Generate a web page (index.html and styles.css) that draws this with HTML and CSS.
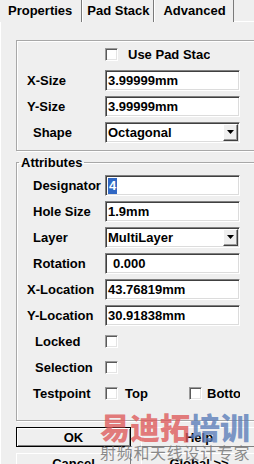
FILE: index.html
```html
<!DOCTYPE html>
<html lang="en">
<head>
  <meta charset="UTF-8">
  <meta name="viewport" content="width=device-width, initial-scale=1.0">
  <title>Pad</title>
  <link rel="stylesheet" href="styles.css">
</head>
<body>
  <div class="dialog">
    <div class="tabs">
      <div class="tab active">Properties</div>
      <div class="tab">Pad Stack</div>
      <div class="tab">Advanced</div>
      <div class="tab-fill"></div>
    </div>

    <div class="page">
      <div class="group">
        <div class="row">
          <span></span>
          <label class="opt clip"><span class="check"></span>Use Pad Stack</label>
        </div>
        <div class="row">
          <span class="lbl lbl-out">X-Size</span>
          <div class="field">3.99999mm</div>
        </div>
        <div class="row">
          <span class="lbl lbl-out">Y-Size</span>
          <div class="field">3.99999mm</div>
        </div>
        <div class="row">
          <span class="lbl">Shape</span>
          <div class="field combo">
            <span>Octagonal</span>
            <span class="drop"><svg width="7" height="4" viewBox="0 0 7 4"><polygon points="0,0 7,0 3.5,4" fill="#000"/></svg></span>
          </div>
        </div>
      </div>

      <fieldset class="group attrs">
        <legend>Attributes</legend>
        <div class="row">
          <span class="lbl">Designator</span>
          <div class="field"><span class="sel">4</span></div>
        </div>
        <div class="row">
          <span class="lbl">Hole Size</span>
          <div class="field">1.9mm</div>
        </div>
        <div class="row">
          <span class="lbl">Layer</span>
          <div class="field combo">
            <span>MultiLayer</span>
            <span class="drop"><svg width="7" height="4" viewBox="0 0 7 4"><polygon points="0,0 7,0 3.5,4" fill="#000"/></svg></span>
          </div>
        </div>
        <div class="row">
          <span class="lbl">Rotation</span>
          <div class="field indent">0.000</div>
        </div>
        <div class="row">
          <span class="lbl lbl-out">X-Location</span>
          <div class="field">43.76819mm</div>
        </div>
        <div class="row">
          <span class="lbl lbl-out">Y-Location</span>
          <div class="field">30.91838mm</div>
        </div>
        <div class="row">
          <span class="lbl lbl-in">Locked</span>
          <div class="opts"><span class="check"></span></div>
        </div>
        <div class="row">
          <span class="lbl lbl-in">Selection</span>
          <div class="opts"><span class="check"></span></div>
        </div>
        <div class="row">
          <span class="lbl">Testpoint</span>
          <div class="opts">
            <label class="opt"><span class="check"></span>Top</label>
            <label class="opt tight"><span class="check"></span>Bottom</label>
          </div>
        </div>
      </fieldset>

      <div class="buttons">
        <button class="btn default">OK</button>
        <button class="btn">Help</button>
        <button class="btn">Cancel</button>
        <button class="btn">Global &gt;&gt;</button>
      </div>
    </div>

    <div class="watermark">
      <div class="wm-title"><span class="wm-red">易迪拓</span><span class="wm-blue">培训</span></div>
      <div class="wm-sub">射频和天线设计专家</div>
    </div>
  </div>
</body>
</html>
```

FILE: styles.css
```css
body {
  margin: 0;
  background: #efefef;
  font-family: "Liberation Sans", Arial, sans-serif;
  font-size: 13px;
  font-weight: bold;
  color: #000;
  overflow: hidden;
}
.dialog {
  position: relative;
  width: 254px;
  height: 464px;
  overflow: hidden;
}

/* tab strip */
.tabs {
  display: flex;
  height: 22px;
}
.tab {
  line-height: 21px;
  padding: 0 4px;
  border-left: 1px solid #fff;
  border-right: 1px solid #7a7a7a;
  white-space: nowrap;
}
.tab.active {
  padding: 0 9px 0 8px;
  border-left: none;
}
.tab:nth-child(3) {
  padding: 0 7px 0 8px;
}
.tab-fill {
  flex: 1;
  border-bottom: 1px solid #fff;
}

.page {
  border-left: 1px solid #fff;
  padding-top: 18px;
}

/* etched group boxes */
.group {
  margin: 0 -40px 0 15px;
  padding: 0 0 5px;
  border: 1px solid #a8a8a8;
  box-shadow: inset 1px 1px 0 #fff, 1px 1px 0 #fff;
}
.attrs {
  margin-top: 4px;
  padding: 2px 0 14px;
  min-width: 0;
}
.attrs legend {
  margin-left: 2px;
  padding: 0 2px;
  line-height: 15px;
}

.row {
  display: grid;
  grid-template-columns: 88px 135px;
  align-items: center;
  height: 26px;
}
.lbl {
  padding-left: 16px;
  white-space: nowrap;
}
.lbl-out {
  padding-left: 10px;
}
.lbl-in {
  padding-left: 18px;
}

.field {
  box-sizing: border-box;
  height: 21px;
  line-height: 19px;
  padding-left: 2px;
  background: #fff;
  border: 1px solid;
  border-color: #808080 #fff #fff #808080;
  box-shadow: inset 1px 1px 0 #404040, inset -1px -1px 0 #dcdcdc;
  white-space: nowrap;
  overflow: hidden;
}
.field.indent {
  padding-left: 7px;
}
.combo {
  display: flex;
  justify-content: space-between;
  align-items: center;
  padding-right: 1px;
}
.drop {
  box-sizing: border-box;
  width: 15px;
  height: 17px;
  display: flex;
  align-items: center;
  justify-content: center;
  background: #efefef;
  border: 1px solid;
  border-color: #fff #404040 #404040 #fff;
  box-shadow: inset -1px -1px 0 #999;
}
.sel {
  display: inline-block;
  line-height: 16px;
  padding: 0 1px;
  background: #3168c4;
  color: #fff;
}

/* checkboxes */
.opts {
  display: grid;
  grid-template-columns: 84px auto;
  overflow: hidden;
  white-space: nowrap;
}
.opt {
  display: flex;
  align-items: center;
  gap: 7px;
  white-space: nowrap;
  overflow: hidden;
}
.opt.tight {
  gap: 5px;
}
.opt.clip {
  width: 105px;
  gap: 10px;
}
.check {
  box-sizing: border-box;
  flex: none;
  width: 13px;
  height: 13px;
  background: #fff;
  border: 1px solid;
  border-color: #9a9a9a #fff #fff #9a9a9a;
  box-shadow: inset 1px 1px 0 #5a5a5a, inset -1px -1px 0 #e4e4e4;
}

/* buttons */
.buttons {
  display: grid;
  grid-template-columns: 115px 116px;
  gap: 6px 10px;
  margin: 6px 0 0 15px;
}
.btn {
  height: 20px;
  padding: 0;
  font: inherit;
  color: #000;
  background: #efefef;
  border: 1px solid;
  border-color: #fff #808080 #808080 #fff;
}
.btn.default {
  border-color: #000;
  box-shadow: inset 1px 1px 0 #fff, inset -1px -1px 0 #808080;
}

/* watermark over the bottom */
.watermark {
  position: absolute;
  left: 100px;
  top: 409px;
  font-family: "Noto Sans CJK SC", sans-serif;
  pointer-events: none;
}
.wm-title {
  font-size: 30px;
  font-weight: 900;
  line-height: 34px;
  white-space: nowrap;
}
.wm-red {
  color: rgba(222, 90, 90, 0.8);
}
.wm-blue {
  color: rgba(90, 125, 185, 0.8);
}
.wm-sub {
  font-size: 16px;
  font-weight: normal;
  letter-spacing: 0.7px;
  line-height: 18px;
  color: rgba(120, 120, 120, 0.85);
  white-space: nowrap;
}
```
